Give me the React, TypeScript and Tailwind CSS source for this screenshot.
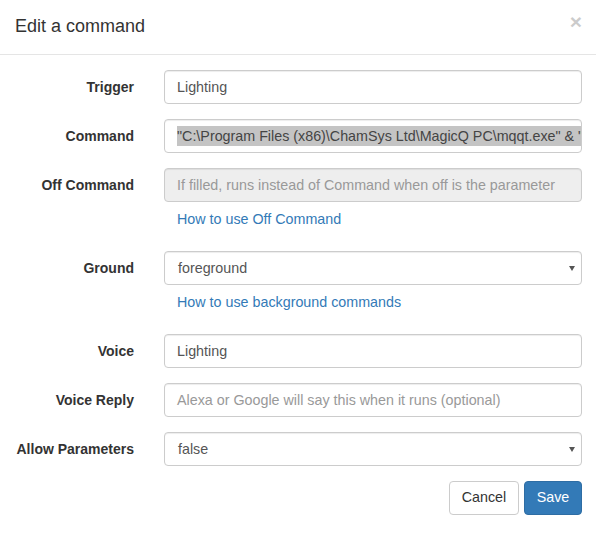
import React from 'react';

const font = { fontFamily: '"Liberation Sans", Arial, sans-serif' };

const Label: React.FC<{ text: string }> = ({ text }) => (
  <label className="w-[134px] shrink-0 text-right text-[14px] font-bold text-[#333] leading-[34px]">{text}</label>
);

const inputBase =
  'h-[34px] w-full rounded-[4px] border border-[#ccc] px-[12px] text-[14.3px] leading-[20px] text-[#555] shadow-[inset_0_1px_1px_rgba(0,0,0,0.075)] flex items-center overflow-hidden whitespace-nowrap';

const Field: React.FC<{ label: string; children: React.ReactNode; help?: string }> = ({ label, children, help }) => (
  <div className="flex gap-[30px] mb-[15px]">
    <Label text={label} />
    <div className="flex-1 min-w-0">
      {children}
      {help && (
        <a className="block mt-[7px] mb-[7px] pl-[13px] text-[14.3px] leading-[20px] text-[#337ab7]">{help}</a>
      )}
    </div>
  </div>
);

const Select: React.FC<{ value: string }> = ({ value }) => (
  <div className={`${inputBase} bg-white justify-between pr-[6px]`}>
    <span className="pl-[1px]">{value}</span>
    <svg width="6" height="5" viewBox="0 0 6 5" className="mt-[1px]">
      <path d="M0 0h6L3 5z" fill="#555" />
    </svg>
  </div>
);

export default function App() {
  return (
    <div className="w-[596px] h-[542px] bg-white overflow-hidden" style={font}>
      <div className="flex items-center justify-between h-[55px] pl-[15px] pr-[14px] border-b border-[#e5e5e5]">
        <h4 className="text-[18px] leading-[26px] text-[#333] font-normal -mt-[2px]">Edit a command</h4>
        <span className="text-[21px] font-bold leading-none text-black opacity-20 -mt-[12px]">×</span>
      </div>
      <div className="pt-[15px] pr-[14px]">
        <Field label="Trigger">
          <div className={`${inputBase} bg-white`}>Lighting</div>
        </Field>
        <Field label="Command">
          <div className={`${inputBase} bg-white`}>
            <span className="bg-[#c4c4c4] text-[#444]">"C:\Program Files (x86)\ChamSys Ltd\MagicQ PC\mqqt.exe" &amp; "C:\Program</span>
          </div>
        </Field>
        <Field label="Off Command" help="How to use Off Command">
          <div className={`${inputBase} bg-[#eee] text-[#999]`}>If filled, runs instead of Command when off is the parameter</div>
        </Field>
        <Field label="Ground" help="How to use background commands">
          <Select value="foreground" />
        </Field>
        <Field label="Voice">
          <div className={`${inputBase} bg-white`}>Lighting</div>
        </Field>
        <Field label="Voice Reply">
          <div className={`${inputBase} bg-white text-[#999]`}>Alexa or Google will say this when it runs (optional)</div>
        </Field>
        <Field label="Allow Parameters">
          <Select value="false" />
        </Field>
        <div className="flex justify-end gap-[5px]">
          <button className="h-[34px] w-[70px] rounded-[4px] border border-[#ccc] bg-white text-[14.3px] text-[#333]">Cancel</button>
          <button className="h-[34px] w-[58px] rounded-[4px] border border-[#2e6da4] bg-[#337ab7] text-[14.3px] text-white">Save</button>
        </div>
      </div>
    </div>
  );
}
